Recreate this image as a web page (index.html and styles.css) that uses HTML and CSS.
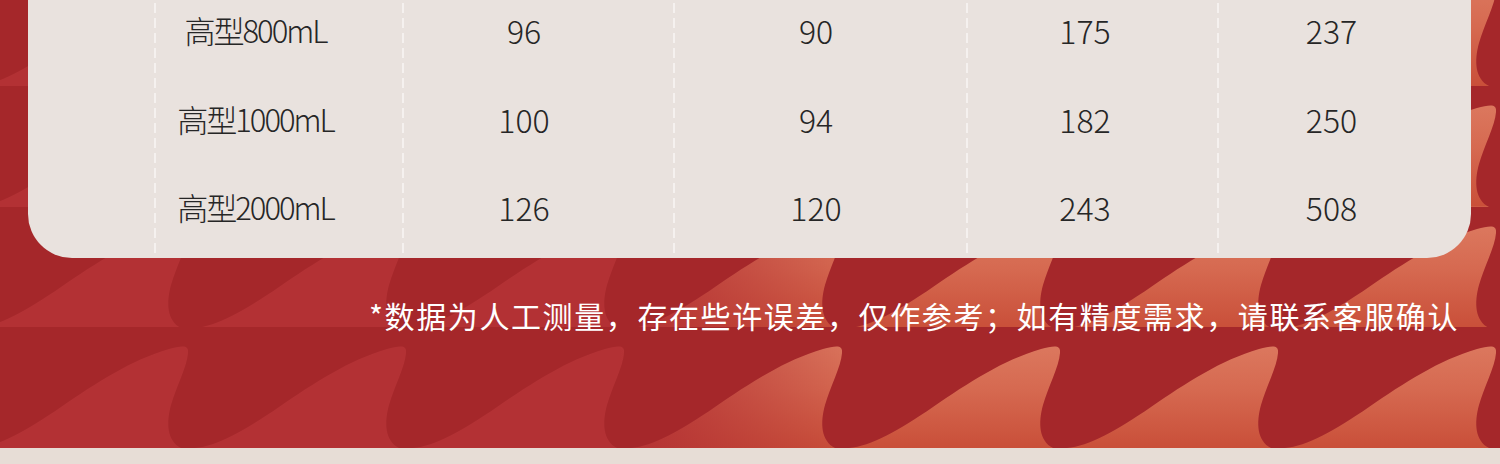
FILE: index.html
```html
<!DOCTYPE html>
<html lang="zh-CN">
<head>
<meta charset="utf-8">
<title>尺寸参数</title>
<link rel="stylesheet" href="styles.css">
</head>
<body>
<div class="page">
  <section class="band">
    <div class="spec-card">
      <div class="spec-row">
        <div class="cell c0"></div>
        <div class="cell c1 name">高型800mL</div>
        <div class="cell c2">96</div>
        <div class="cell c3">90</div>
        <div class="cell c4">175</div>
        <div class="cell c5">237</div>
      </div>
      <div class="spec-row">
        <div class="cell c0"></div>
        <div class="cell c1 name">高型1000mL</div>
        <div class="cell c2">100</div>
        <div class="cell c3">94</div>
        <div class="cell c4">182</div>
        <div class="cell c5">250</div>
      </div>
      <div class="spec-row">
        <div class="cell c0"></div>
        <div class="cell c1 name">高型2000mL</div>
        <div class="cell c2">126</div>
        <div class="cell c3">120</div>
        <div class="cell c4">243</div>
        <div class="cell c5">508</div>
      </div>
    </div>
    <p class="note">*数据为人工测量，存在些许误差，仅作参考；如有精度需求，请联系客服确认</p>
  </section>
  <div class="base"></div>
</div>
</body>
</html>
```
FILE: styles.css
```css
html, body {
  margin: 0;
  padding: 0;
}

body {
  width: 1500px;
  height: 464px;
  overflow: hidden;
  background: #e7ddd6;
  font-family: "Noto Sans CJK SC", "Noto Sans", sans-serif;
}

.page {
  display: flex;
  flex-direction: column;
  width: 1500px;
}

.band {
  display: flex;
  flex-direction: column;
  height: 448px;
  overflow: hidden;
  background-color: #a5272a;
  background-image:
    url("data:image/svg+xml,%3Csvg xmlns='http://www.w3.org/2000/svg' width='218' height='121' viewBox='0 0 218 121' preserveAspectRatio='none'%3E%3Cpath fill='%23a5272a' fill-rule='evenodd' d='M0 0H218V121H0Z M6 121C28 119 55 104 90 80C125 56 160 33 198 22C210 19 218 17 217 26C216 40 205 60 200 78C195 96 196 114 210 121Z'/%3E%3C/svg%3E"),
    linear-gradient(to right, #b33134 0, #b33134 620px, rgba(179, 49, 52, 0) 860px),
    linear-gradient(to bottom, #de7e64 0, #d66a51 50%, #c94f39 100%);
  background-size: 218px 120.75px, 100% 100%, 100% 120.75px;
  background-position: -29px -34.75px, 0 0, 0 -34.75px;
  background-repeat: repeat, no-repeat, repeat-y;
}

.spec-card {
  margin: -14px 29px 0 28px;
  padding-bottom: 6px;
  border-radius: 0 0 44px 44px;
  background-color: #e9e2de;
  background-image:
    linear-gradient(#f5f1ef 0 10px, transparent 10px),
    linear-gradient(#f5f1ef 0 10px, transparent 10px),
    linear-gradient(#f5f1ef 0 10px, transparent 10px),
    linear-gradient(#f5f1ef 0 10px, transparent 10px),
    linear-gradient(#f5f1ef 0 10px, transparent 10px);
  background-size: 2px 15px;
  background-repeat: repeat-y;
  background-position: 126px 2px, 374px 2px, 645px 2px, 938px 2px, 1189px 2px;
}

.spec-row {
  display: grid;
  grid-template-columns: 126px 248px 271px 293px 251px 254px;
  height: 88.6px;
}

.cell {
  line-height: 88.6px;
  text-align: center;
  font-size: 32px;
  font-weight: 300;
  color: #262626;
  white-space: nowrap;
}

.name {
  font-size: 31px;
  letter-spacing: -2px;
}

.c1 { padding-right: 45px; }
.c2 { padding-right: 27px; }
.c3 { padding-right: 7px; }
.c4 { padding-right: 13px; }
.c5 { padding-right: 25px; }

.note {
  margin: 37px 0 0 0;
  padding-right: 41px;
  text-align: right;
  font-size: 30px;
  line-height: 40px;
  letter-spacing: 1.6px;
  color: #ffffff;
  white-space: nowrap;
}

.base {
  height: 16px;
  background: #e7ddd6;
}
```
